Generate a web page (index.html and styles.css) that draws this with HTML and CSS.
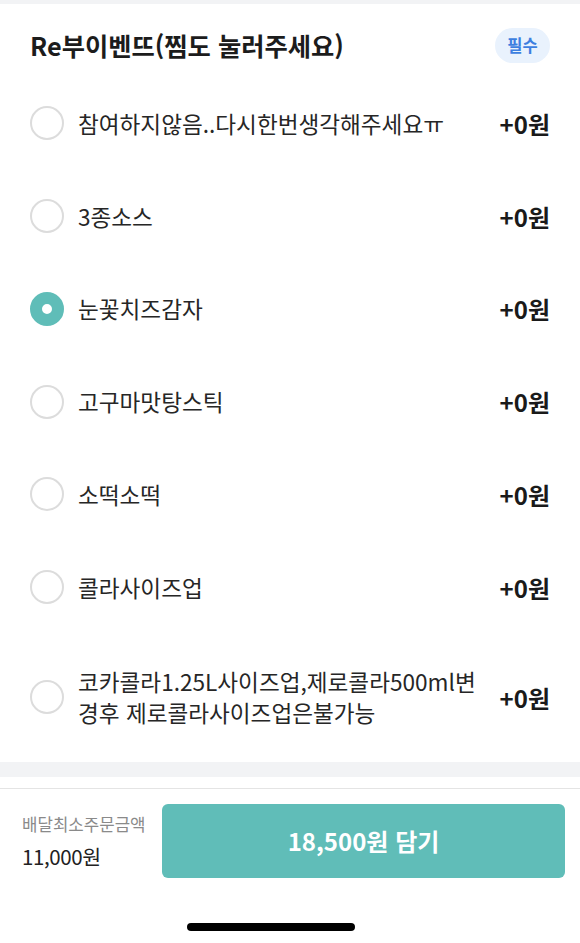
FILE: index.html
```html
<!DOCTYPE html>
<html lang="ko">
<head>
<meta charset="utf-8">
<link rel="stylesheet" href="styles.css">
</head>
<body>
<div class="strip"></div>
<section class="group">
  <div class="group-head">
    <h2 class="title">Re부이벤뜨(찜도 눌러주세요)</h2>
    <span class="badge">필수</span>
  </div>
  <ul class="options">
    <li class="option"><span class="radio"></span><span class="label">참여하지않음..다시한번생각해주세요ㅠ</span><span class="price">+0원</span></li>
    <li class="option"><span class="radio"></span><span class="label">3종소스</span><span class="price">+0원</span></li>
    <li class="option"><span class="radio checked"></span><span class="label">눈꽃치즈감자</span><span class="price">+0원</span></li>
    <li class="option"><span class="radio"></span><span class="label">고구마맛탕스틱</span><span class="price">+0원</span></li>
    <li class="option"><span class="radio"></span><span class="label">소떡소떡</span><span class="price">+0원</span></li>
    <li class="option"><span class="radio"></span><span class="label">콜라사이즈업</span><span class="price">+0원</span></li>
    <li class="option tall"><span class="radio"></span><span class="label">코카콜라1.25L사이즈업,제로콜라500ml변경후 제로콜라사이즈업은불가능</span><span class="price">+0원</span></li>
  </ul>
</section>
<div class="band"></div>
<footer class="bar">
  <div class="min">
    <div class="min-label">배달최소주문금액</div>
    <div class="min-value">11,000원</div>
  </div>
  <button class="cta">18,500원 담기</button>
</footer>
<div class="home"><span class="home-bar"></span></div>
</body>
</html>
```

FILE: styles.css
```css
* { box-sizing: border-box; }
html, body { margin: 0; padding: 0; background: #fff; }
body {
  width: 580px;
  height: 943px;
  overflow: hidden;
  font-family: "Noto Sans CJK KR", "Noto Sans", sans-serif;
  color: #222;
}
.strip { height: 4px; background: #f2f3f5; }
.group { padding: 0 30px 0 30px; }
.group-head {
  height: 73px;
  padding-top: 9px;
  display: flex;
  align-items: center;
  justify-content: space-between;
}
.title {
  margin: 0;
  font-size: 25.3px;
  font-weight: 700;
  letter-spacing: 0;
  color: #1c1c1c;
}
.badge {
  display: inline-flex;
  align-items: center;
  justify-content: center;
  width: 55px;
  height: 35px;
  border-radius: 18px;
  background: #e9f2fd;
  color: #3d7fe0;
  font-size: 16.5px;
  font-weight: 700;
}
.options { list-style: none; margin: 0; padding: 0; }
.option {
  height: 92.75px;
  display: flex;
  align-items: center;
}
.option.tall { height: 127px; }
.radio {
  flex: none;
  width: 34px;
  height: 34px;
  border-radius: 50%;
  border: 2.5px solid #dcdcdc;
  margin-right: 14px;
}
.radio.checked {
  border: 12px solid #5fbdb8;
  background: #fff;
}
.label {
  flex: 1;
  font-size: 22.6px;
  line-height: 31px;
  letter-spacing: 0;
  color: #262626;
  padding-right: 12px;
}
.price {
  flex: none;
  font-size: 24px;
  font-weight: 700;
  color: #1a1a1a;
  letter-spacing: 0;
}
.band { height: 15px; background: #f2f3f5; margin-top: 1px; }
.bar {
  margin-top: 11px;
  border-top: 1px solid #e4e4e4;
  padding: 15px 15px 0 22px;
  display: flex;
  align-items: flex-start;
}
.min { width: 140px; padding-top: 9px; }
.min-label { font-size: 16.8px; color: #8a8a8a; letter-spacing: 0; line-height: 22px; }
.min-value { font-size: 20.5px; color: #222; margin-top: 8px; letter-spacing: -0.4px; line-height: 26px; }
.cta {
  flex: 1;
  height: 74px;
  border: 0;
  border-radius: 6px;
  background: #60bdb8;
  color: #fff;
  font-family: inherit;
  font-size: 24px;
  font-weight: 700;
  letter-spacing: 0;
}
.home { display: flex; justify-content: flex-start; padding-top: 45px; padding-left: 187px; }
.home-bar { width: 168px; height: 8px; border-radius: 4px; background: #000; }
```
